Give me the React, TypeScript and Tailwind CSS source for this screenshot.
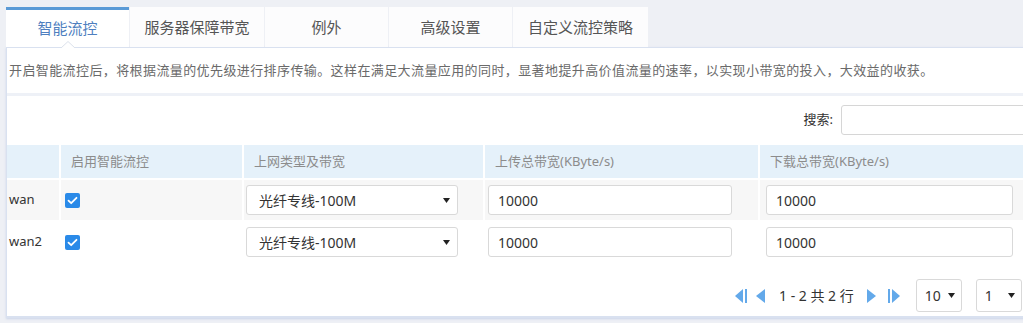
import React from 'react';

const font = { fontFamily: '"Noto Sans", "Noto Sans CJK SC", sans-serif' };

const tabs = [
  { label: '智能流控', w: 'w-[123px]', active: true },
  { label: '服务器保障带宽', w: 'w-[134px]' },
  { label: '例外', w: 'w-[123px]' },
  { label: '高级设置', w: 'w-[123px]' },
  { label: '自定义流控策略', w: 'w-[135px]' },
];

const rows = [
  { name: 'wan', striped: true },
  { name: 'wan2', striped: false },
];

function Check() {
  return (
    <svg width="15" height="15" viewBox="0 0 15 15">
      <rect x="0" y="0" width="15" height="15" rx="2" fill="#2a8ae8" />
      <path d="M3.5 7.6 L6.2 10.2 L11.5 4.8" fill="none" stroke="#fff" strokeWidth="1.8" strokeLinecap="round" strokeLinejoin="round" />
    </svg>
  );
}

function Caret() {
  return (
    <svg width="7" height="5" viewBox="0 0 7 5">
      <path d="M0 0 L7 0 L3.5 5 Z" fill="#222" />
    </svg>
  );
}

function PagerIcon({ kind }: { kind: 'first' | 'prev' | 'next' | 'last' }) {
  const c = '#63a9ea';
  if (kind === 'first')
    return (
      <svg width="13" height="16" viewBox="0 0 13 16">
        <path d="M0 8 L8 1 L8 15 Z" fill={c} />
        <rect x="10" y="1" width="2" height="14" fill={c} />
      </svg>
    );
  if (kind === 'prev')
    return (
      <svg width="11" height="16" viewBox="0 0 11 16">
        <path d="M1 8 L10 1 L10 15 Z" fill={c} />
      </svg>
    );
  if (kind === 'next')
    return (
      <svg width="11" height="16" viewBox="0 0 11 16">
        <path d="M10 8 L1 1 L1 15 Z" fill={c} />
      </svg>
    );
  return (
    <svg width="13" height="16" viewBox="0 0 13 16">
      <rect x="1" y="1" width="2" height="14" fill={c} />
      <path d="M13 8 L5 1 L5 15 Z" fill={c} />
    </svg>
  );
}

export default function App() {
  return (
    <div className="h-[323px] w-[1023px] overflow-hidden bg-[#eef0f5] pl-[6px] pt-[7px]" style={font}>
      <div className="w-[1040px]">
        {/* Tabs */}
        <div className="flex h-[40px] gap-[1px]">
          {tabs.map((t) => (
            <div
              key={t.label}
              className={`${t.w} relative flex items-center justify-center text-[15px] ${
                t.active
                  ? 'border-t-[3px] border-[#5a9ad6] bg-white text-[#4f7fbf]'
                  : 'bg-[#fcfcfd] text-[#555]'
              }`}
            >
              {t.label}
              {t.active && (
                <svg className="absolute bottom-[-1px] left-[55px]" width="14" height="7" viewBox="0 0 14 7">
                  <path d="M0 7 L7 0.5 L14 7" fill="#fff" stroke="#dbe1eb" strokeWidth="1" />
                </svg>
              )}
            </div>
          ))}
        </div>

        {/* Panel */}
        <div className="border-l border-t border-b-2 border-[#d9e1f0] bg-white shadow-[0_1px_2px_rgba(180,195,225,0.6)]">
          <div className="flex h-[45px] items-center pl-[2px] text-[13px] tracking-[0.4px] text-[#6a6a6a]">
            开启智能流控后，将根据流量的优先级进行排序传输。这样在满足大流量应用的同时，显著地提升高价值流量的速率，以实现小带宽的投入，大效益的收获。
          </div>
          <div className="h-[3px] bg-[#eef1f7]" />

          {/* Search */}
          <div className="flex h-[49px] items-start justify-end pt-[9px]">
            <div className="flex items-center gap-[8px]">
              <span className="text-[13px] text-[#333]">搜索:</span>
              <div className="h-[30px] w-[205px] rounded-[3px] border border-[#d6d6d6] bg-white" />
            </div>
          </div>

          {/* Table */}
          <div className="grid grid-cols-[52px_181px_239px_273px_1fr] gap-[2px] text-[13px]">
            <div className="h-[33px] bg-[#e5f1fa]" />
            <div className="flex h-[33px] items-center bg-[#e5f1fa] pl-[10px] text-[#8c8c8c]">启用智能流控</div>
            <div className="flex h-[33px] items-center bg-[#e5f1fa] pl-[10px] text-[#8c8c8c]">上网类型及带宽</div>
            <div className="flex h-[33px] items-center bg-[#e5f1fa] pl-[10px] text-[#8c8c8c]">上传总带宽(KByte/s)</div>
            <div className="flex h-[33px] items-center bg-[#e5f1fa] pl-[10px] text-[#8c8c8c]">下载总带宽(KByte/s)</div>

            {rows.map((r) => {
              const bg = r.striped ? 'bg-[#f7f7f7]' : 'bg-white';
              return (
                <React.Fragment key={r.name}>
                  <div className={`flex h-[40px] items-center pl-[2px] text-[#333] ${bg}`}>{r.name}</div>
                  <div className={`flex h-[40px] items-center pl-[4px] ${bg}`}>
                    <Check />
                  </div>
                  <div className={`flex h-[40px] items-center pl-[2px] ${bg}`}>
                    <div className="flex h-[30px] w-[212px] items-center justify-between rounded-[3px] border border-[#d9d9d9] bg-white pl-[12px] pr-[7px] text-[14px] text-[#333]">
                      <span>光纤专线-100M</span>
                      <Caret />
                    </div>
                  </div>
                  <div className={`flex h-[40px] items-center pl-[3px] ${bg}`}>
                    <div className="flex h-[30px] w-[244px] items-center rounded-[3px] border border-[#d9d9d9] bg-white pl-[9px] text-[14px] text-[#333]">
                      10000
                    </div>
                  </div>
                  <div className={`flex h-[40px] items-center pl-[6px] ${bg}`}>
                    <div className="flex h-[30px] w-[247px] items-center rounded-[3px] border border-[#d9d9d9] bg-white pl-[9px] text-[14px] text-[#333]">
                      10000
                    </div>
                  </div>
                </React.Fragment>
              );
            })}
          </div>

          {/* Pager */}
          <div className="flex h-[54px] items-start pt-[17px] pl-[728px]">
            <div className="flex h-[33px] items-center">
              <PagerIcon kind="first" />
              <span className="w-[7px]" />
              <PagerIcon kind="prev" />
              <span className="ml-[13px] text-[14px] text-[#333]">1 - 2 共 2 行</span>
              <span className="ml-[12px]">
                <PagerIcon kind="next" />
              </span>
              <span className="ml-[10px]">
                <PagerIcon kind="last" />
              </span>
              <div className="ml-[16px] flex h-[33px] w-[46px] items-center justify-between rounded-[3px] border border-[#d9d9d9] bg-white pl-[8px] pr-[6px] text-[14px] text-[#333]">
                <span>10</span>
                <Caret />
              </div>
              <div className="ml-[14px] flex h-[33px] w-[46px] items-center justify-between rounded-[3px] border border-[#d9d9d9] bg-white pl-[8px] pr-[6px] text-[14px] text-[#333]">
                <span>1</span>
                <Caret />
              </div>
            </div>
          </div>
        </div>
      </div>
    </div>
  );
}
